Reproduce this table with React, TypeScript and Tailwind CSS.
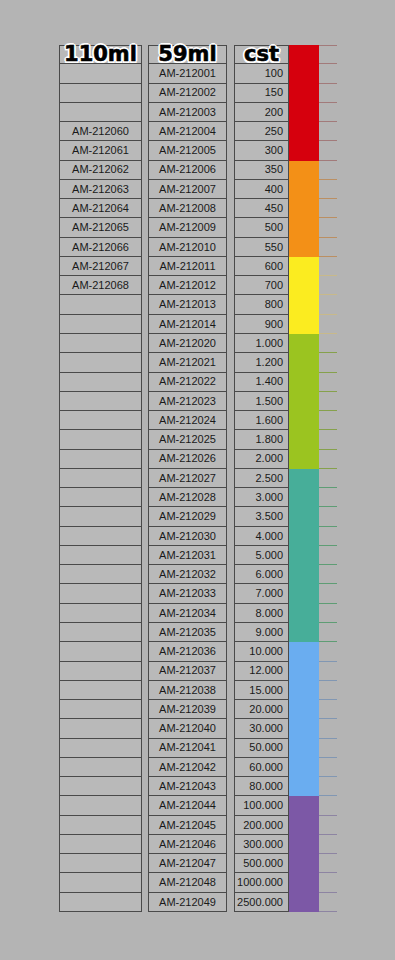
import React from "react";

const codes: string[] = [];
for (let i = 1; i <= 14; i++) codes.push("AM-2120" + String(i).padStart(2, "0"));
for (let i = 20; i <= 49; i++) codes.push("AM-2120" + String(i));

const values = [
  "100", "150", "200", "250", "300", "350", "400", "450", "500", "550", "600", "700", "800", "900",
  "1.000", "1.200", "1.400", "1.500", "1.600", "1.800", "2.000",
  "2.500", "3.000", "3.500", "4.000", "5.000", "6.000", "7.000", "8.000", "9.000",
  "10.000", "12.000", "15.000", "20.000", "30.000", "50.000", "60.000", "80.000",
  "100.000", "200.000", "300.000", "500.000", "1000.000", "2500.000",
];

const col1: string[] = Array(44).fill("");
for (let i = 0; i < 9; i++) col1[3 + i] = "AM-21206" + i;

type Band = { bar: string; line: string };
const bands: Band[] = [
  { bar: "#d6000d", line: "#a27a7a" },
  { bar: "#f39017", line: "#bb8f62" },
  { bar: "#fbec20", line: "#c8b98a" },
  { bar: "#9bc420", line: "#86a14c" },
  { bar: "#47ae99", line: "#5e9d74" },
  { bar: "#6aadf0", line: "#8197b3" },
  { bar: "#7c58a6", line: "#8d84a2" },
];
const bandOf = (i: number) =>
  i < 5 ? 0 : i < 10 ? 1 : i < 14 ? 2 : i < 21 ? 3 : i < 30 ? 4 : i < 38 ? 5 : 6;

const headerCls =
  "h-[19.27px] border-y border-[#4a4a4a] flex items-center justify-center text-[21px] leading-none font-bold text-black [font-family:'DejaVu_Sans',sans-serif] [text-shadow:-1.5px_-1.5px_0_#fff,1.5px_-1.5px_0_#fff,-1.5px_1.5px_0_#fff,1.5px_1.5px_0_#fff,0_2px_0_#fff,0_-2px_0_#fff,2px_0_0_#fff,-2px_0_0_#fff]";
const cellCls =
  "h-[19.27px] border-b border-[#4a4a4a] flex items-center text-[11px] text-[#1a1a1a] [font-family:'Liberation_Sans',Arial,sans-serif]";

function Table({ title, rows, width, align }: { title: string; rows: string[]; width: string; align: "center" | "right" }) {
  return (
    <div className={`flex flex-col border-x border-[#4a4a4a] bg-[#b9b9b9] ${width}`}>
      <div className={headerCls}>
        <span className="[-webkit-text-stroke:0.6px_#000]">{title}</span>
      </div>
      {rows.map((r, i) => (
        <div key={i} className={`${cellCls} ${align === "center" ? "justify-center" : "justify-end pr-[5px]"}`}>
          {r}
        </div>
      ))}
    </div>
  );
}

export default function App() {
  return (
    <div className="min-h-[960px] w-[395px] bg-[#b4b4b4] pt-[45px] pl-[59px]">
      <div className="flex items-start">
        <Table title="110ml" rows={col1} width="w-[83px]" align="center" />
        <div className="w-[6px]" />
        <Table title="59ml" rows={codes} width="w-[79px]" align="center" />
        <div className="w-[7px]" />
        <Table title="cst" rows={values} width="w-[55px]" align="right" />
        <div className="flex flex-col w-[30px]">
          <div className="h-[19.27px]" style={{ background: bands[0].bar }} />
          {values.map((_, i) => (
            <div key={i} className="h-[19.27px]" style={{ background: bands[bandOf(i)].bar }} />
          ))}
        </div>
        <div className="flex flex-col w-[18px]">
          <div className="h-[19.27px] border-y" style={{ borderColor: bands[0].line }} />
          {values.map((_, i) => (
            <div key={i} className="h-[19.27px] border-b" style={{ borderColor: bands[bandOf(i)].line }} />
          ))}
        </div>
      </div>
    </div>
  );
}
